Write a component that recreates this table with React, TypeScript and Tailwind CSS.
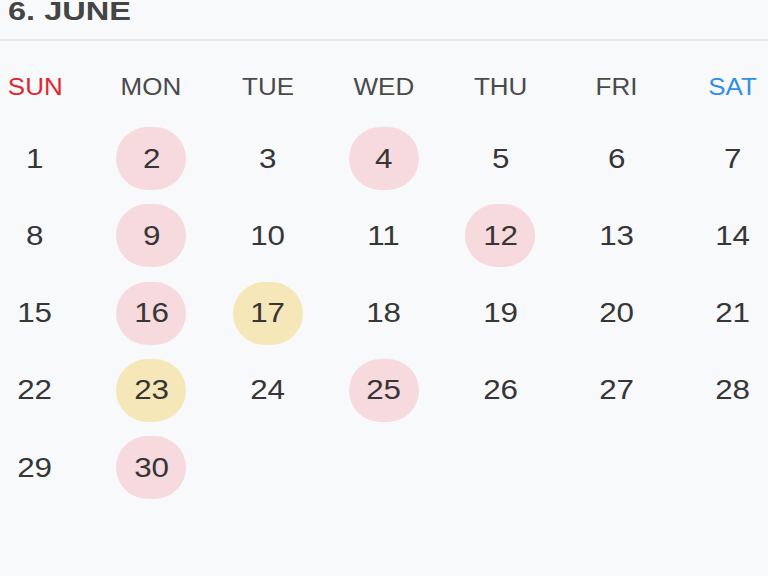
import React from "react";

type Mark = "pink" | "yellow" | undefined;

const DAYS = ["SUN", "MON", "TUE", "WED", "THU", "FRI", "SAT"];

// marked dates in June
const marks: Record<number, Mark> = {
  2: "pink",
  4: "pink",
  9: "pink",
  12: "pink",
  16: "pink",
  17: "yellow",
  23: "yellow",
  25: "pink",
  30: "pink",
};

function dayColor(i: number) {
  if (i === 0) return "text-[#e3262e]";
  if (i === 6) return "text-[#2f8fe6]";
  return "text-[#4a4a4a]";
}

function DayCell({ day }: { day: number | null }) {
  if (day === null) return <div className="w-[70px] h-[63px]" />;
  const mark = marks[day];
  const bg =
    mark === "pink" ? "bg-[#f6dadd]" : mark === "yellow" ? "bg-[#f6e7b8]" : "";
  return (
    <div className={`w-[70px] h-[63px] rounded-full flex items-center justify-center ${bg}`}>
      <span className="inline-block scale-x-[1.12] text-[28px] leading-none text-[#363636]">
        {day}
      </span>
    </div>
  );
}

export default function App() {
  const weeks: (number | null)[][] = [];
  let week: (number | null)[] = [];
  for (let d = 1; d <= 30; d++) {
    week.push(d);
    if (week.length === 7) {
      weeks.push(week);
      week = [];
    }
  }
  while (week.length > 0 && week.length < 7) week.push(null);
  if (week.length) weeks.push(week);

  return (
    <div
      className="w-[768px] h-[576px] overflow-hidden bg-[#f8f9fb]"
      style={{ fontFamily: '"Liberation Sans", Arial, sans-serif' }}
    >
      {/* month title, cut at top */}
      <div className="h-[41px] border-b-2 border-[#e6e7ea] px-[8px]">
        <span className="inline-block origin-left scale-x-[1.25] text-[26px] font-bold leading-none text-[#454545] -mt-[2px]">
          6. JUNE
        </span>
      </div>

      {/* weekday names */}
      <div className="flex justify-between pt-[16px] h-[76px]">
        {DAYS.map((d, i) => (
          <div key={d} className="w-[70px] h-[60px] flex items-center justify-center">
            <span className={`inline-block scale-x-[1.13] text-[23px] leading-none ${dayColor(i)}`}>
              {d}
            </span>
          </div>
        ))}
      </div>

      {/* dates */}
      <div className="flex flex-col gap-y-[14.3px] mt-[10px]">
        {weeks.map((w, wi) => (
          <div key={wi} className="flex justify-between">
            {w.map((d, di) => (
              <DayCell key={di} day={d} />
            ))}
          </div>
        ))}
      </div>
    </div>
  );
}
